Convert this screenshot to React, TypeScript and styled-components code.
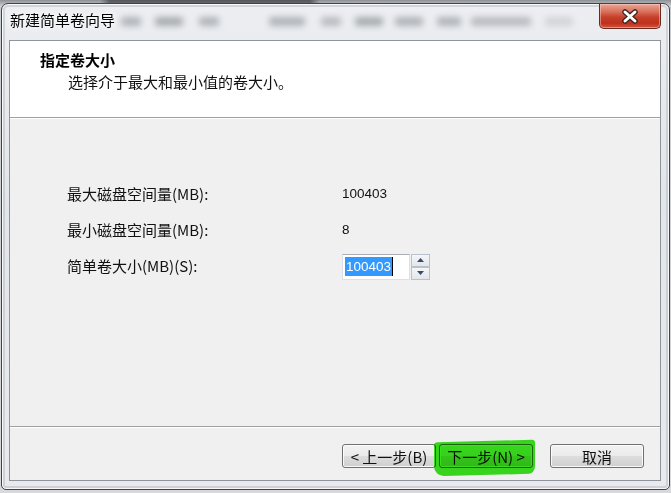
import React from 'react';
import styled, { createGlobalStyle } from 'styled-components';

const Global = createGlobalStyle`
  html, body { margin: 0; padding: 0; }
  body {
    width: 671px; height: 493px; overflow: hidden;
    background: #b9bcc0;
    font-family: "Noto Sans CJK SC", "Noto Sans", sans-serif;
  }
`;

const Page = styled.div`
  width: 671px; height: 493px; box-sizing: border-box;
  padding: 3px 1px 3px 1px;
  background:
    linear-gradient(90deg, transparent 100px, rgba(40,40,40,.55) 110px, rgba(40,40,40,.55) 310px, transparent 320px) 0 0 / 100% 3px no-repeat,
    linear-gradient(#8d9196, #c9ccd0 6px, #d7d9dc);
  display: flex;
`;

const Window = styled.div`
  flex: 1;
  min-width: 0;
  box-sizing: border-box;
  border: 1px solid #3f4246;
  border-radius: 7px 7px 5px 5px;
  background: linear-gradient(180deg, #eceef1 0%, #e2e5e9 40%, #e8eaed 100%);
  box-shadow: inset 0 0 0 1px rgba(255,255,255,.85), inset 0 0 0 3px rgba(120,125,130,.22);
  padding: 0 8px 8px 7px;
  display: flex;
  flex-direction: column;
`;

const TitleBar = styled.div`
  height: 36px;
  flex: none;
  display: flex;
  align-items: flex-start;
`;

const Title = styled.div`
  flex: none;
  margin: 5px 0 0 1px;
  font-size: 15px;
  line-height: 22px;
  color: #000;
  text-shadow: 0 0 6px #fff, 0 0 10px #fff;
  white-space: nowrap;
`;

const Smudges = styled.div`
  flex: 1;
  min-width: 0;
  overflow: hidden;
  display: flex;
  align-items: center;
  height: 22px;
  margin-top: 6px;
  padding-left: 4px;
`;

const Smudge = styled.span<{ $w: number; $g: number; $a: number }>`
  display: block;
  flex: none;
  width: ${(p) => p.$w}px;
  height: 9px;
  margin-left: ${(p) => p.$g}px;
  background: rgba(70, 74, 80, ${(p) => p.$a});
  border-radius: 3px;
  filter: blur(3px);
`;

const Close = styled.div`
  flex: none;
  width: 62px;
  height: 25px;
  box-sizing: border-box;
  border: 1px solid #6b2a20;
  border-top: none;
  border-radius: 0 0 5px 5px;
  background: linear-gradient(180deg, #e9a898 0%, #d86a55 35%, #c5402a 55%, #c0301c 80%, #d0553f 100%);
  box-shadow: inset 0 0 0 1px rgba(255,220,210,.45);
  display: flex;
  align-items: center;
  justify-content: center;
`;

const Client = styled.div`
  flex: 1;
  min-height: 0;
  border: 1px solid #8d949b;
  background: #f0f0f0;
  display: flex;
  flex-direction: column;
`;

const Header = styled.div`
  height: 77px;
  flex: none;
  box-sizing: border-box;
  background: #fff;
  border-bottom: 1px solid #a0a0a0;
  box-shadow: 0 1px 0 #fff;
  padding: 8px 0 0 30px;
`;

const HeadTitle = styled.div`
  font-size: 15px;
  font-weight: 700;
  line-height: 22px;
  color: #000;
`;

const HeadSub = styled.div`
  font-size: 15px;
  line-height: 22px;
  color: #111;
  padding-left: 28px;
`;

const Body = styled.div`
  flex: 1;
  margin-top: 1px;
  padding: 56px 0 0 57px;
  display: grid;
  grid-template-columns: 275px auto;
  grid-auto-rows: 36px;
  align-content: start;
  align-items: center;
`;

const Label = styled.div`
  font-size: 15px;
  color: #111;
  white-space: nowrap;
`;

const Value = styled.div`
  font-family: "Liberation Sans", Arial, sans-serif;
  font-size: 13.5px;
  color: #111;
`;

const SpinRow = styled.div`
  display: flex;
  align-items: stretch;
  height: 26px;
  margin-top: 3px;
`;

const TextBox = styled.div`
  width: 68px;
  box-sizing: border-box;
  border: 1px solid #dbdfe6;
  border-top-color: #abadb3;
  background: #fff;
  display: flex;
  align-items: center;
  padding-left: 2px;
`;

const Selected = styled.span`
  font-family: "Liberation Sans", Arial, sans-serif;
  font-size: 13.5px;
  line-height: 19px;
  background: #3399ff;
  color: #fff;
  padding: 0 1px;
  border-right: 1px solid #000;
`;

const Spinner = styled.div`
  width: 19px;
  margin-left: 1px;
  display: flex;
  flex-direction: column;
`;

const SpinBtn = styled.div`
  flex: 1;
  box-sizing: border-box;
  border: 1px solid #b9c2cc;
  background: linear-gradient(#f4f6f8, #e2e6ea);
  display: flex;
  align-items: center;
  justify-content: center;
`;

const Footer = styled.div`
  height: 54px;
  flex: none;
  box-sizing: border-box;
  border-top: 1px solid #a0a0a0;
  box-shadow: inset 0 1px 0 #fff;
  display: flex;
  justify-content: flex-end;
  align-items: flex-start;
  padding: 17px 16px 0 0;
`;

const Btn = styled.button<{ $gap?: number }>`
  width: 94px;
  height: 24px;
  flex: none;
  margin-left: ${(p) => p.$gap ?? 0}px;
  box-sizing: border-box;
  border: 1px solid #707070;
  border-radius: 3px;
  background: linear-gradient(#f2f2f2 0%, #ebebeb 48%, #dddddd 52%, #cfcfcf 100%);
  box-shadow: inset 0 0 0 1px rgba(255,255,255,.85);
  font-family: "Noto Sans CJK SC", sans-serif;
  font-size: 15px;
  color: #111;
  padding: 0;
  display: flex;
  align-items: center;
  justify-content: center;
  white-space: nowrap;
`;

const Highlight = styled.div`
  position: relative;
  flex: none;
  margin-left: 3px;
  &::after {
    content: "";
    position: absolute;
    left: -5px; right: -2px; top: -3px; bottom: -7px;
    background: #3be21e;
    mix-blend-mode: multiply;
    border-radius: 4px 3px 6px 10px / 3px 3px 8px 10px;
    transform: skewY(-1.5deg);
    pointer-events: none;
  }
`;

const smudges: [number, number, number][] = [
  [20, 2, 0.35], [28, 14, 0.4], [20, 16, 0.35], [36, 50, 0.35], [20, 16, 0.3],
  [28, 14, 0.4], [28, 12, 0.35], [24, 14, 0.35], [60, 10, 0.3], [28, 14, 0.15],
];

export default function App() {
  return (
    <>
      <Global />
      <Page>
        <Window>
          <TitleBar>
            <Title>新建简单卷向导</Title>
            <Smudges>
              {smudges.map(([w, g, a], i) => (
                <Smudge key={i} $w={w} $g={g} $a={a} />
              ))}
            </Smudges>
            <Close>
              <svg width="18" height="15" viewBox="0 0 18 15">
                <path d="M4 3 L14 12 M14 3 L4 12" stroke="#3b2420" strokeWidth="5.5" strokeLinecap="round" />
                <path d="M4 3 L14 12 M14 3 L4 12" stroke="#fff" strokeWidth="3" strokeLinecap="round" />
              </svg>
            </Close>
          </TitleBar>
          <Client>
            <Header>
              <HeadTitle>指定卷大小</HeadTitle>
              <HeadSub>选择介于最大和最小值的卷大小。</HeadSub>
            </Header>
            <Body>
              <Label>最大磁盘空间量(MB):</Label>
              <Value>100403</Value>
              <Label>最小磁盘空间量(MB):</Label>
              <Value>8</Value>
              <Label>简单卷大小(MB)(S):</Label>
              <SpinRow>
                <TextBox>
                  <Selected>100403</Selected>
                </TextBox>
                <Spinner>
                  <SpinBtn>
                    <svg width="7" height="4" viewBox="0 0 7 4"><path d="M0 4 L3.5 0 L7 4 Z" fill="#3a4a66" /></svg>
                  </SpinBtn>
                  <SpinBtn>
                    <svg width="7" height="4" viewBox="0 0 7 4"><path d="M0 0 L3.5 4 L7 0 Z" fill="#3a4a66" /></svg>
                  </SpinBtn>
                </Spinner>
              </SpinRow>
            </Body>
            <Footer>
              <Btn>&lt; 上一步(B)</Btn>
              <Highlight>
                <Btn>下一步(N) &gt;</Btn>
              </Highlight>
              <Btn $gap={17}>取消</Btn>
            </Footer>
          </Client>
        </Window>
      </Page>
    </>
  );
}
